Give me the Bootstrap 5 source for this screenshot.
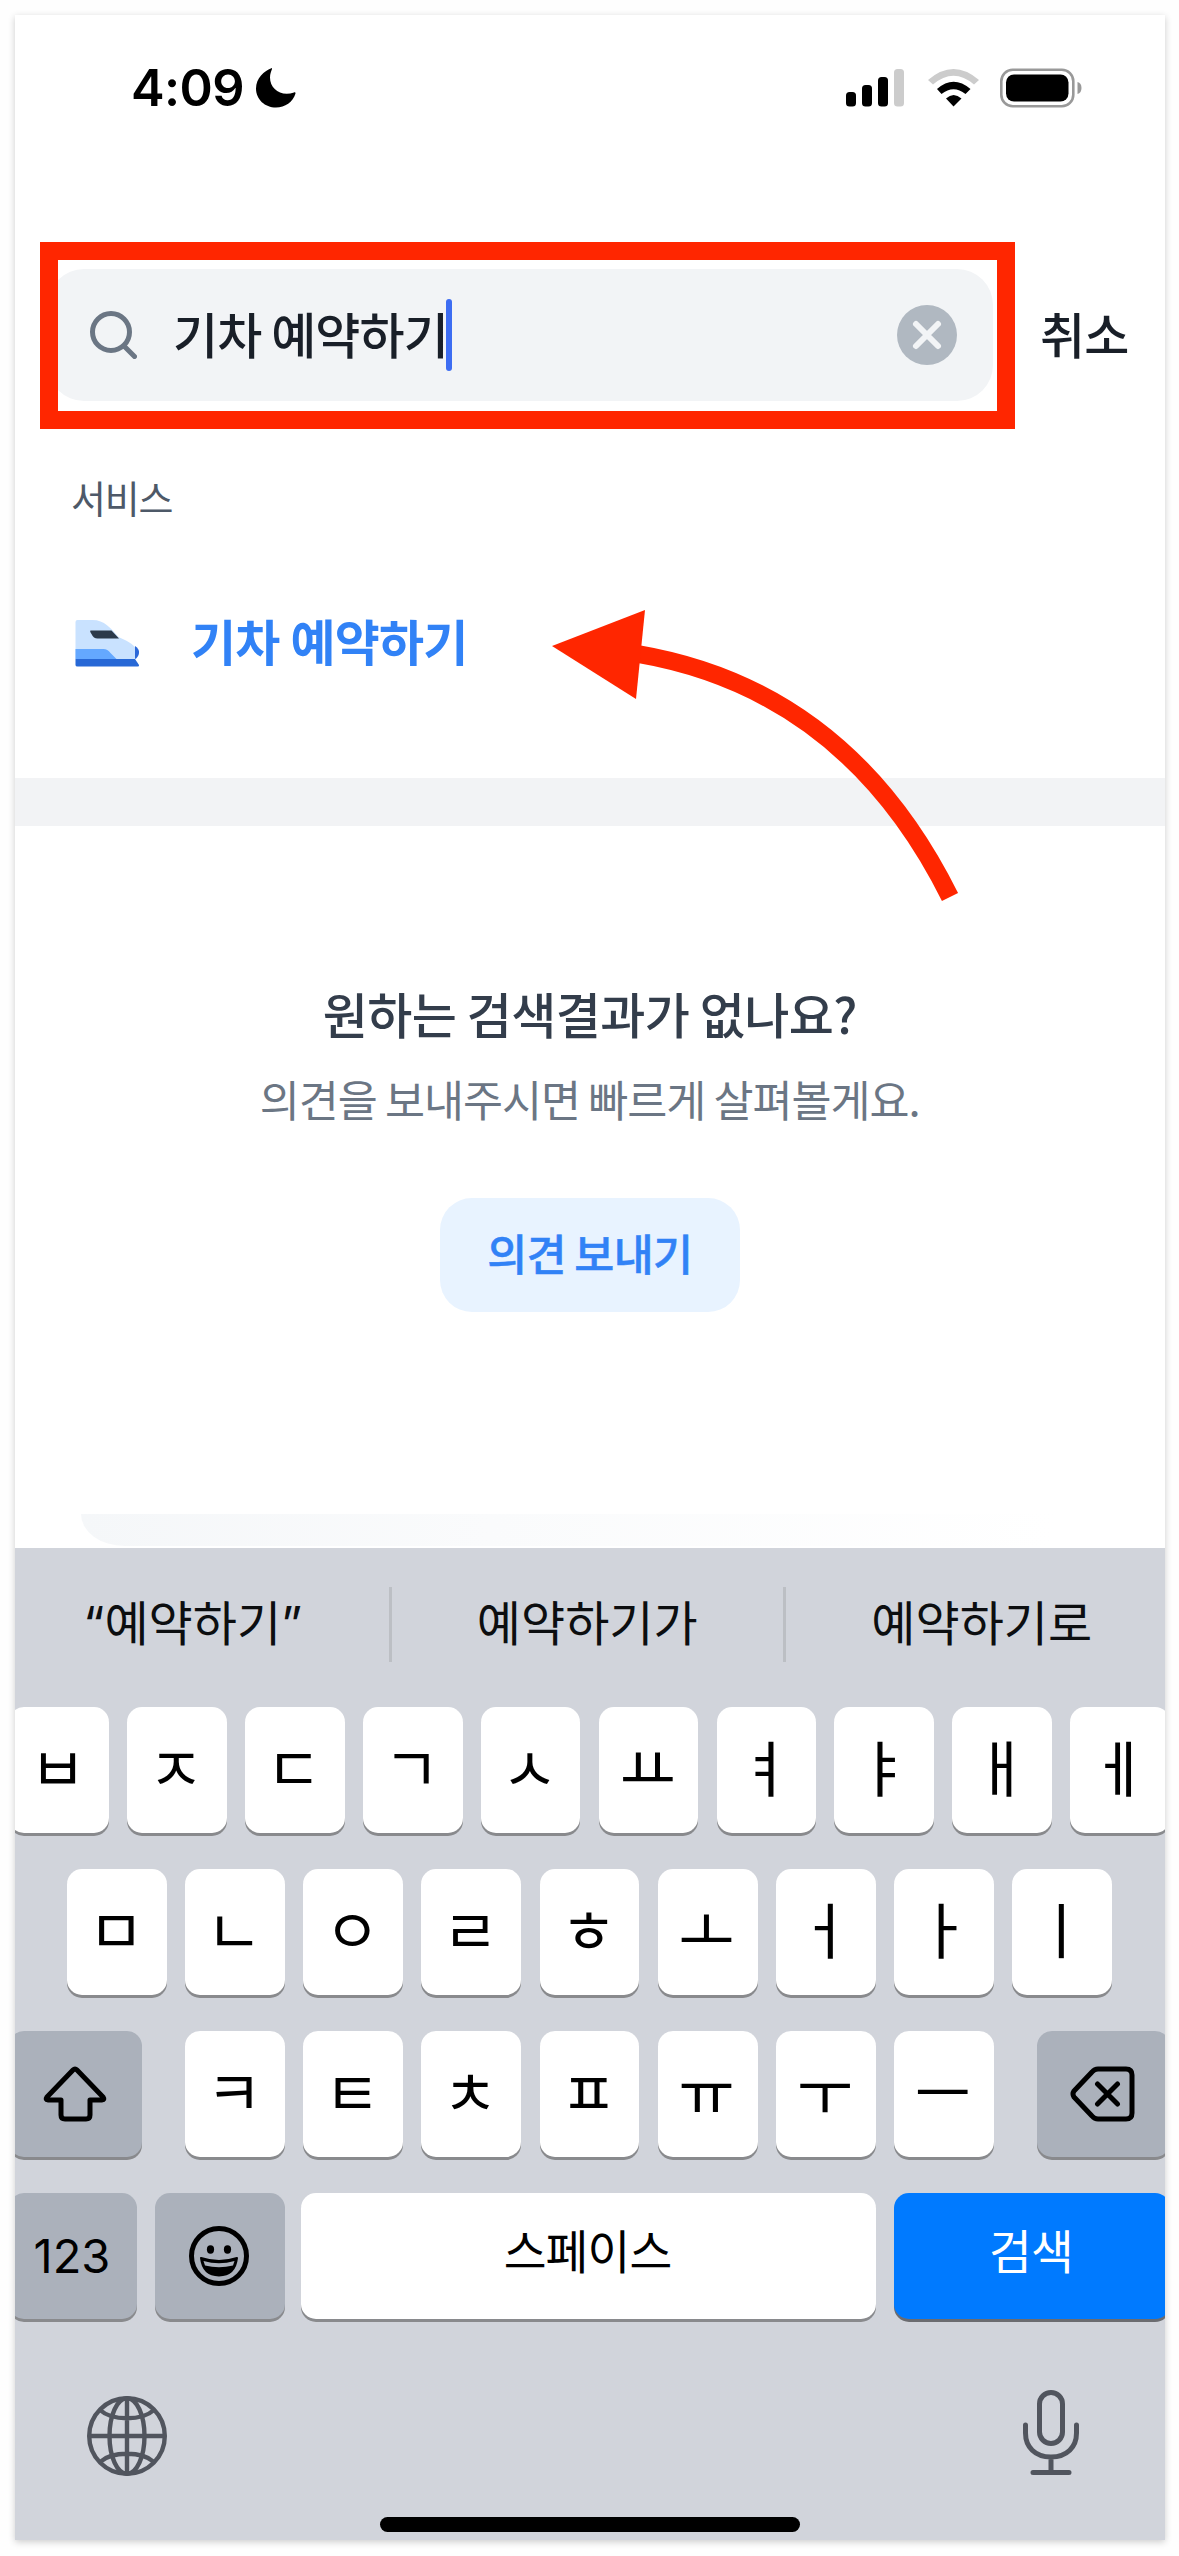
<!DOCTYPE html>
<html lang="ko">
<head>
<meta charset="utf-8">
<meta name="viewport" content="width=device-width, initial-scale=1">
<title>기차 예약하기</title>
<link href="https://cdn.jsdelivr.net/npm/bootstrap@5.3.0/dist/css/bootstrap.min.css" rel="stylesheet">
<style>
body{background:#fefefe;font-family:"Noto Sans CJK KR","Inter",sans-serif;width:1179px;height:2556px;overflow:hidden;padding:15px 14.5px 0 15px}
svg{display:block;flex:none}
.phone{height:2525px;background:#fff;box-shadow:0 2px 7px rgba(0,0,0,.2)}
.phone>*{flex:none}
.statusbar{height:146px;padding:0 83px 0 116px}
.clock{font:600 50.5px/60px "Inter",sans-serif;letter-spacing:-.6px;width:125px;color:#000}
.batt{margin-left:20px}
.searchrow{margin-top:81px;padding-left:25px;height:187px;gap:25px}
.hilite{width:975px;height:187px;border:18px solid #ff2600;padding:9px 4px 9px 0}
.field{height:132px;margin-left:-10px;background:#f2f4f6;border-radius:36px;padding:0 36px 0 41px}
.query{font-size:49px;font-weight:500;color:#191f28;margin-left:36px;white-space:nowrap;letter-spacing:-.9px;word-spacing:-3px;padding-bottom:5px}
.caret{width:6px;height:72px;border-radius:3px;background:#3d6df2;margin-left:-2px}
.cancel{font-size:49px;font-weight:500;color:#191f28;white-space:nowrap;letter-spacing:-.8px;padding-bottom:5px}
.t{line-height:60px}
.sect{margin-top:38px;padding-left:56px;color:#4e5968;font-size:38px;height:60px;letter-spacing:-1.2px}
.item{margin-top:86px;padding-left:60px;height:60px;gap:51px}
.item span{color:#3182f6;font-weight:700;font-size:49px;letter-spacing:-.8px;word-spacing:-2px;padding-bottom:6px}
.band{height:48px;margin-top:105px;background:#f2f3f5}
.empty{height:688px;padding-top:157px}
.empty h1{font-size:49px;font-weight:500;color:#333d4b;line-height:60px;margin:0;letter-spacing:-.6px;word-spacing:-2.5px}
.empty p{font-size:43.5px;color:#6b7684;line-height:60px;margin:26px 0 0;letter-spacing:-1px;word-spacing:-3px}
.send{margin-top:69px;width:300px;height:114px;border:0;border-radius:32px;background:#e8f3ff;color:#3182f6;font-size:43.5px;font-weight:500;padding:0 0 5px;letter-spacing:-.7px;word-spacing:-3px;-webkit-text-stroke:.5px #3182f6}
.sliver{height:32px;margin:0 60px 0 66px;border-radius:0 0 60px 60px/0 0 44px 44px;background:linear-gradient(95deg,#f5f7f9,#fafbfc 40%,#fff 95%)}
.kbd{background:#d1d4db;height:992px;margin-top:2px}
.sugg{height:159px;padding:39px 0 0;margin:0 -13px 0 -18px}
.sugg>div{flex:1 1 0;height:75px;padding-bottom:2px;font-family:"Inter","Noto Sans CJK KR",sans-serif;font-size:48px;color:#0c0e10}
.sugg>div+div{border-left:3px solid #bcbfc4}
.keys{margin:0 -6px;gap:36px;width:1161px}
.keys>div{height:126px;gap:18.2px}
.k{flex:1 1 0;display:flex;align-items:center;justify-content:center;background:#fff;border-radius:15px;box-shadow:0 3px 0 #898a8d;font-size:61px;color:#000;line-height:60px;padding:0 2px 8px 0}
.r2{padding:0 58px}
.k.side{flex:none;width:133px;background:#abb1bb;padding-bottom:0}
.k.num{width:128px;font:400 47px/60px "Inter",sans-serif}
.k.emo{width:130px;margin-right:-2px}
.k.shift{margin-right:25px;padding-right:2px}
.k.del{margin-left:25px;padding-right:0}
.k.space,.k.go{font-size:46.500px;padding-bottom:14px;letter-spacing:-.8px}
.k.go{flex:none;width:276px;background:#007aff;color:#fff;box-shadow:0 3px 0 #6b6c70}
.foot{padding:71px 86px 0 72px;height:195px}
.globe{margin-top:6px}
.home{width:420px;height:15px;border-radius:8px;background:#000;margin:3px auto 0}
.arrow{left:537px;top:590px}
</style>
<script src="https://cdn.jsdelivr.net/npm/bootstrap@5.3.0/dist/js/bootstrap.bundle.min.js"></script>
</head>
<body>
<main class="phone d-flex flex-column position-relative overflow-visible">
  <header class="statusbar d-flex align-items-center">
    <span class="clock">4:09</span>
    <svg width="40" height="40" viewBox="0 0 40 40"><path d="M16 0C8 3 0 10 0 20.500C0 31.500 9 39.500 20 39.500C29 39.500 37 34 39.500 25.500C39.500 24.500 39 24 38 24.500C25 29 14 21 14 9.500C14 6 15 4 16 1Z"/></svg>
    <div class="ms-auto d-flex align-items-center">
      <svg width="58" height="38" viewBox="0 0 58 38"><rect y="23" width="10" height="14.500" rx="3.500"/><rect x="16" y="16" width="10" height="21.500" rx="3.500"/><rect x="32" y="8" width="10" height="29.500" rx="3.500"/><rect x="48" width="10" height="37.500" rx="3.500" fill="#ccc"/></svg>
      <svg class="ms-4" width="51" height="38" viewBox="0 0 51 38"><path d="M0 11Q25.500-11 51 11L46 15.500Q25.500-2 5 15.500Z" fill="#ccc"/><path d="M9 20Q25.500 5.500 42.500 20L37.500 25Q25.500 15.500 13.500 25Z"/><path d="M18 29.500Q25.500 22.500 33.500 29.500L25.500 37.500Z"/></svg>
      <svg class="batt" width="83" height="40" viewBox="0 0 83 40"><rect x="2.300" y="1.700" width="72" height="36.500" rx="11.500" fill="none" stroke="#999" stroke-width="2.600"/><rect x="7" y="6.500" width="62.500" height="27" rx="8"/><path d="M78.500 14Q82.500 15 82.500 20T78.500 26Z" fill="#999"/></svg>
    </div>
  </header>

  <section class="searchrow d-flex align-items-center">
    <div class="hilite overflow-hidden">
      <div class="field d-flex align-items-center">
        <svg width="48" height="48" viewBox="0 0 48 48" fill="none" stroke="#6b7684" stroke-width="5" stroke-linecap="round"><circle cx="22" cy="21" r="18.500"/><path d="M35 35L45.500 45.500"/></svg>
        <span class="query t">기차 예약하기</span><span class="caret"></span>
        <svg class="ms-auto" width="60" height="60" viewBox="0 0 60 60"><circle cx="30" cy="30" r="30" fill="#b0b8c1"/><path d="M19 19L41 41M41 19L19 41" stroke="#f2f4f6" stroke-width="6" stroke-linecap="round"/></svg>
      </div>
    </div>
    <span class="cancel t">취소</span>
  </section>

  <div class="sect t">서비스</div>
  <div class="item d-flex align-items-center">
    <svg width="65" height="47" viewBox="-0.500 0 65 47"><path d="M0 2Q0 0 2 0H17C29 0 35 8 43 17C50 20 58 24 61 29V39H0Z" fill="#c9e2ff"/><path d="M0 29H28Q32 29 35 33L41 39H0Z" fill="#64a8ff"/><path d="M59.500 26Q64 29 63.500 33Q63 37 59.500 39Z" fill="#2b67d8"/><path d="M0 39H59.500L63.500 45Q64 46.500 62 46.500H2Q0 46.500 0 45Z" fill="#2768d6"/><path d="M15 10.500H36L43.500 18.500H22Q18 18.500 16 14Q14 11 15 10.500Z" fill="#2c3a4b"/></svg>
    <span class="t">기차 예약하기</span>
  </div>
  <div class="band"></div>

  <section class="empty d-flex flex-column align-items-center">
    <h1>원하는 검색결과가 없나요?</h1>
    <p>의견을 보내주시면 빠르게 살펴볼게요.</p>
    <button class="send btn">의견 보내기</button>
  </section>
  <div class="sliver"></div>

  <section class="kbd overflow-hidden">
    <div class="sugg d-flex">
      <div class="d-flex align-items-center justify-content-center">“예약하기”</div>
      <div class="d-flex align-items-center justify-content-center">예약하기가</div>
      <div class="d-flex align-items-center justify-content-center">예약하기로</div>
    </div>
    <div class="keys d-flex flex-column">
      <div class="d-flex"><div class="k">ㅂ</div><div class="k">ㅈ</div><div class="k">ㄷ</div><div class="k">ㄱ</div><div class="k">ㅅ</div><div class="k">ㅛ</div><div class="k">ㅕ</div><div class="k">ㅑ</div><div class="k">ㅐ</div><div class="k">ㅔ</div></div>
      <div class="d-flex r2"><div class="k">ㅁ</div><div class="k">ㄴ</div><div class="k">ㅇ</div><div class="k">ㄹ</div><div class="k">ㅎ</div><div class="k">ㅗ</div><div class="k">ㅓ</div><div class="k">ㅏ</div><div class="k">ㅣ</div></div>
      <div class="d-flex">
        <div class="k side shift"><svg width="64" height="56" viewBox="0 0 64 56" fill="none" stroke="#000" stroke-width="5" stroke-linejoin="round"><path d="M30 4Q32 2 34 4L60 31Q62 34 59 34H47V49Q47 53 43 53H22Q18 53 18 49V34H5Q2 34 4 31Z"/></svg></div>
        <div class="k">ㅋ</div><div class="k">ㅌ</div><div class="k">ㅊ</div><div class="k">ㅍ</div><div class="k">ㅠ</div><div class="k">ㅜ</div><div class="k">ㅡ</div>
        <div class="k side del"><svg width="66" height="56" viewBox="0 0 66 56" fill="none" stroke="#000" stroke-width="5" stroke-linejoin="round" stroke-linecap="round"><path d="M28 3H56Q62 3 62 9V47Q62 53 56 53H28Q24.500 53 22 50L4 31Q2 28 4 25L22 6Q24.500 3 28 3ZM27.500 18L47.500 38M47.500 18L27.500 38"/></svg></div>
      </div>
      <div class="d-flex">
        <div class="k side num">123</div>
        <div class="k side emo"><svg width="60" height="60" viewBox="0 0 60 60"><circle cx="30" cy="30" r="27.500" fill="none" stroke="#000" stroke-width="5"/><ellipse cx="21.500" cy="23.500" rx="3.600" ry="4.200"/><ellipse cx="38.500" cy="23.500" rx="3.600" ry="4.200"/><path d="M12 32Q30 38 48 32Q46 49.500 30 49.500T12 32Z" stroke="#000" stroke-width="2" stroke-linejoin="round"/><path d="M14.500 35Q30 39.500 45.500 35L44 39.500Q30 43 16 39.500Z" fill="#abb1bb"/></svg></div>
        <div class="k space">스페이스</div>
        <div class="k go">검색</div>
      </div>
    </div>
    <div class="foot d-flex justify-content-between align-items-start">
      <svg class="globe" width="80" height="80" viewBox="0 0 80 80" fill="none" stroke="#51555e" stroke-width="4.400"><circle cx="40" cy="40" r="37.800"/><ellipse cx="40" cy="40" rx="17.500" ry="37.800"/><path d="M40 2V78M2 40H78M13 14C25 25 55 25 67 14M13 66C25 55 55 55 67 66"/></svg>
      <svg width="56" height="86" viewBox="0 0 56 86" fill="none" stroke="#51555e" stroke-width="5" stroke-linecap="round"><rect x="16.500" y="2.500" width="23" height="51" rx="11.500"/><path d="M2.500 35V43C2.500 57 12 67 28 67S53.500 57 53.500 43V35M28 67V82M10 82.500H46"/></svg>
    </div>
    <div class="home"></div>
  </section>

  <svg class="arrow position-absolute" width="410" height="300" viewBox="552 605 410 300"><path d="M638 654Q847 690 950 897" fill="none" stroke="#ff2600" stroke-width="18"/><path d="M552 646L645 610L636 699Z" fill="#ff2600"/></svg>
</main>
</body>
</html>
